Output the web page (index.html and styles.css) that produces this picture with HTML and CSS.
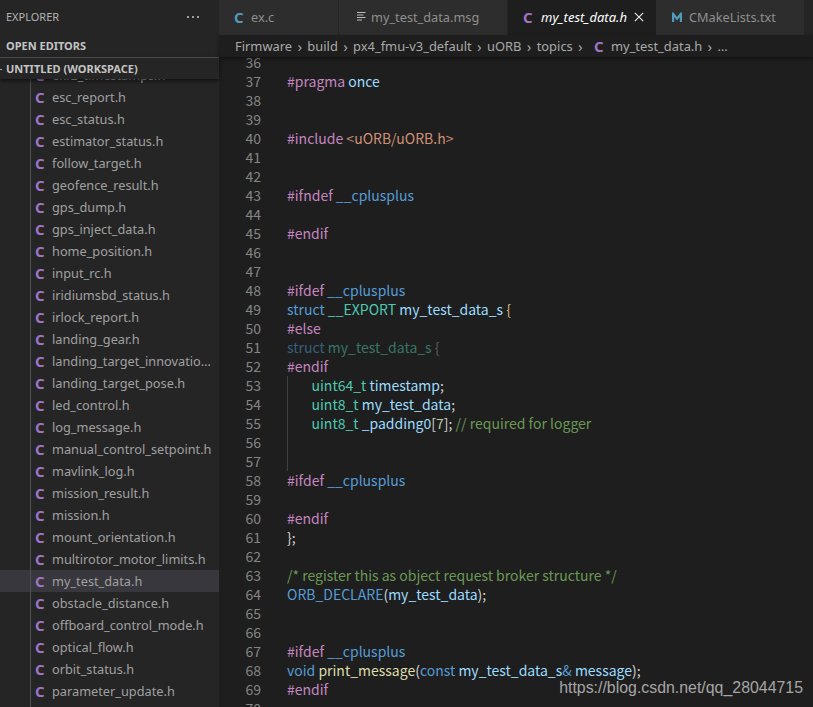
FILE: index.html
```html
<!DOCTYPE html>
<html lang="en">
<head>
<meta charset="utf-8">
<title>my_test_data.h</title>
<link rel="stylesheet" href="styles.css">
</head>
<body>
<div class="app">
  <aside class="sidebar">
    <div class="explorer-head"><span>EXPLORER</span><svg width="14" height="4" viewBox="0 0 14 4"><circle cx="2" cy="2" r="1" fill="#c8c8c8"/><circle cx="7" cy="2" r="1" fill="#c8c8c8"/><circle cx="12" cy="2" r="1" fill="#c8c8c8"/></svg></div>
    <div class="section">OPEN EDITORS</div>
    <div class="section workspace"><svg class="twist" width="6" height="22" viewBox="0 0 6 22"><path d="M0 11.500h2" stroke="#aaa" fill="none"/></svg>UNTITLED (WORKSPACE)</div>
    <div class="tree-wrap">
      <ul class="tree">
        <li><b>C</b><span>ekf2_timestamps.h</span></li>
        <li><b>C</b><span>esc_report.h</span></li>
        <li><b>C</b><span>esc_status.h</span></li>
        <li><b>C</b><span>estimator_status.h</span></li>
        <li><b>C</b><span>follow_target.h</span></li>
        <li><b>C</b><span>geofence_result.h</span></li>
        <li><b>C</b><span>gps_dump.h</span></li>
        <li><b>C</b><span>gps_inject_data.h</span></li>
        <li><b>C</b><span>home_position.h</span></li>
        <li><b>C</b><span>input_rc.h</span></li>
        <li><b>C</b><span>iridiumsbd_status.h</span></li>
        <li><b>C</b><span>irlock_report.h</span></li>
        <li><b>C</b><span>landing_gear.h</span></li>
        <li><b>C</b><span>landing_target_innovatio…</span></li>
        <li><b>C</b><span>landing_target_pose.h</span></li>
        <li><b>C</b><span>led_control.h</span></li>
        <li><b>C</b><span>log_message.h</span></li>
        <li><b>C</b><span>manual_control_setpoint.h</span></li>
        <li><b>C</b><span>mavlink_log.h</span></li>
        <li><b>C</b><span>mission_result.h</span></li>
        <li><b>C</b><span>mission.h</span></li>
        <li><b>C</b><span>mount_orientation.h</span></li>
        <li><b>C</b><span>multirotor_motor_limits.h</span></li>
        <li class="selected"><b>C</b><span>my_test_data.h</span></li>
        <li><b>C</b><span>obstacle_distance.h</span></li>
        <li><b>C</b><span>offboard_control_mode.h</span></li>
        <li><b>C</b><span>optical_flow.h</span></li>
        <li><b>C</b><span>orbit_status.h</span></li>
        <li><b>C</b><span>parameter_update.h</span></li>
      </ul>
    </div>
  </aside>
  <main class="main">
    <div class="tabs">
      <div class="tab t1"><b class="blue">C</b><span>ex.c</span></div>
      <div class="tab t2"><svg width="9" height="9" viewBox="0 0 9 9"><path d="M0 .5h8.500M0 3h6.500M0 5.500h8.500M0 8h5" stroke="#bbb" fill="none"/></svg><span>my_test_data.msg</span></div>
      <div class="tab t3 active"><b>C</b><em>my_test_data.h</em><svg class="close" width="10" height="10" viewBox="0 0 10 10"><path d="M.8.8l8.400 8.400M9.200.8L.8 9.200" stroke="#eee" fill="none" stroke-width="1.100"/></svg></div>
      <div class="tab t4"><svg width="12" height="12" viewBox="0 0 12 12"><path d="M1 11V1.500h1.500L6 6l3.500-4.500H11V11H8.800V6L6 9.500 3.200 6v5z" fill="#519aba"/></svg><span>CMakeLists.txt</span></div>
    </div>
    <div class="crumbs">
      <span>Firmware</span><i>›</i><span>build</span><i>›</i><span>px4_fmu-v3_default</span><i>›</i><span>uORB</span><i>›</i><span>topics</span><i>›</i><b>C</b><span>my_test_data.h</span><i>›</i><span>…</span>
    </div>
    <div class="code">
      <div class="ln"><u>36</u><code></code></div>
      <div class="ln"><u>37</u><code><s class="pp">#pragma</s> <s class="v">once</s></code></div>
      <div class="ln"><u>38</u><code></code></div>
      <div class="ln"><u>39</u><code></code></div>
      <div class="ln"><u>40</u><code><s class="pp">#include</s> <s class="st">&lt;uORB/uORB.h&gt;</s></code></div>
      <div class="ln"><u>41</u><code></code></div>
      <div class="ln"><u>42</u><code></code></div>
      <div class="ln"><u>43</u><code><s class="pp">#ifndef</s> <s class="k">__cplusplus</s></code></div>
      <div class="ln"><u>44</u><code></code></div>
      <div class="ln"><u>45</u><code><s class="pp">#endif</s></code></div>
      <div class="ln"><u>46</u><code></code></div>
      <div class="ln"><u>47</u><code></code></div>
      <div class="ln"><u>48</u><code><s class="pp">#ifdef</s> <s class="k">__cplusplus</s></code></div>
      <div class="ln"><u>49</u><code><s class="k">struct</s> <s class="t">__EXPORT</s> <s class="v">my_test_data_s</s> <s class="br">{</s></code></div>
      <div class="ln"><u>50</u><code><s class="pp">#else</s></code></div>
      <div class="ln"><u>51</u><code class="dim"><s class="k">struct</s> <s class="t">my_test_data_s</s> <s class="g">{</s></code></div>
      <div class="ln"><u>52</u><code><s class="pp">#endif</s></code></div>
      <div class="ln guide"><u>53</u><code><s class="t">uint64_t</s> <s class="v">timestamp</s>;</code></div>
      <div class="ln guide"><u>54</u><code><s class="t">uint8_t</s> <s class="v">my_test_data</s>;</code></div>
      <div class="ln guide"><u>55</u><code><s class="t">uint8_t</s> <s class="v">_padding0</s>[<s class="n">7</s>]; <s class="c">// required for logger</s></code></div>
      <div class="ln guide"><u>56</u><code></code></div>
      <div class="ln guide"><u>57</u><code></code></div>
      <div class="ln"><u>58</u><code><s class="pp">#ifdef</s> <s class="k">__cplusplus</s></code></div>
      <div class="ln"><u>59</u><code></code></div>
      <div class="ln"><u>60</u><code><s class="pp">#endif</s></code></div>
      <div class="ln"><u>61</u><code>};</code></div>
      <div class="ln"><u>62</u><code></code></div>
      <div class="ln"><u>63</u><code><s class="c">/* register this as object request broker structure */</s></code></div>
      <div class="ln"><u>64</u><code><s class="k">ORB_DECLARE</s>(<s class="v">my_test_data</s>);</code></div>
      <div class="ln"><u>65</u><code></code></div>
      <div class="ln"><u>66</u><code></code></div>
      <div class="ln"><u>67</u><code><s class="pp">#ifdef</s> <s class="k">__cplusplus</s></code></div>
      <div class="ln"><u>68</u><code><s class="k">void</s> <s class="f">print_message</s>(<s class="k">const</s> <s class="v">my_test_data_s</s><s class="k">&amp;</s> <s class="v">message</s>);</code></div>
      <div class="ln"><u>69</u><code><s class="pp">#endif</s></code></div>
      <div class="ln"><u>70</u><code></code></div>
    </div>
  </main>
  <div class="watermark">https://blog.csdn.net/qq_28044715</div>
</div>
</body>
</html>
```
FILE: styles.css
```css
* { box-sizing: border-box; }
html, body { margin: 0; height: 100%; overflow: hidden; background: #1e1e1e; }
.app { position: relative; display: flex; width: 813px; height: 707px; overflow: hidden; font-family: "Noto Sans", "Open Sans", sans-serif; }

.sidebar { width: 219px; flex: none; display: flex; flex-direction: column; background: #252526; color: #a9a9a9; }
.explorer-head { height: 35px; flex: none; display: flex; align-items: center; justify-content: space-between; padding: 0 19px 2px 6px; font-size: 11px; color: #b4b4b4; }
.section { position: relative; height: 22px; flex: none; display: flex; align-items: center; padding: 0 0 2px 6px; font-size: 11px; font-weight: 700; color: #c4c4c4; }
.workspace { border-top: 1px solid #4a4a4a; z-index: 2; box-shadow: 0 2px 4px rgba(0,0,0,.55); background: #252526; padding-bottom: 1px; }
.twist { position: absolute; left: 0; top: 0; }
.tree-wrap { flex: 1; overflow: hidden; position: relative; }
.tree { list-style: none; margin: -15px 0 0; padding: 0; position: relative; }
.tree::before { content: ""; position: absolute; left: 30px; top: 0; bottom: -40px; width: 1px; background: #4f4f4f; z-index: 1; }
.tree li { height: 22px; display: flex; align-items: center; padding-left: 35px; font-size: 12.750px; white-space: nowrap; color: #a0a0a0; }
.tree li b { width: 17px; flex: none; font-family: "Noto Sans", sans-serif; font-size: 15px; font-weight: 700; color: #a074c4; }
.tree li.selected { background: #37373d; }

.main { flex: 1; min-width: 0; display: flex; flex-direction: column; }
.tabs { height: 35px; flex: none; display: flex; background: #252526; font-size: 12.750px; }
.tab { display: flex; align-items: center; height: 35px; padding-bottom: 2px; background: #2d2d2d; color: #8f8f8f; border-right: 1px solid #252526; }
.tab b { font-size: 15px; color: #a074c4; }
.tab b.blue { color: #519aba; }
.t1 { width: 120px; padding-left: 15px; }
.t1 b { width: 17px; }
.t2 { width: 169px; padding-left: 18px; }
.t2 svg { margin-right: 5px; }
.t3 { width: 148px; padding-left: 15px; }
.t3 b { width: 18px; }
.t4 { width: 149px; padding-left: 15px; }
.t4 svg { margin-right: 6px; }
.active { background: #1e1e1e; color: #fff; border-right: none; }
.active em { font-style: italic; font-size: 13px; }
.close { margin-left: 7px; }

.crumbs { height: 22px; flex: none; display: flex; align-items: center; padding-left: 16px; font-size: 12.900px; color: #a9a9a9; background: #1e1e1e; box-shadow: 0 2px 4px rgba(0,0,0,.4); position: relative; z-index: 1; white-space: nowrap; }
.crumbs i { font-style: normal; font-size: 15px; margin: 0 5.300px; color: #a0a0a0; line-height: 1; }
.crumbs b { width: 17px; margin-left: 6px; font-size: 15px; color: #a074c4; }

.code { flex: 1; overflow: hidden; margin-top: -4px; font-family: "Noto Sans CJK SC", "Noto Sans", sans-serif; font-size: 14px; color: #d4d4d4; }
.ln { display: flex; height: 19px; line-height: 19px; white-space: pre; }
.ln u { width: 42px; flex: none; text-align: right; text-decoration: none; color: #858585; }
.ln code { font-family: inherit; margin-left: 26px; }
.guide code { position: relative; padding-left: 24.500px; flex: 1; }
.guide code::before { content: ""; position: absolute; left: 0; top: 0; bottom: 0; width: 1px; background: #404040; }
.ln s { text-decoration: none; }
.pp { color: #c586c0; }
.k { color: #569cd6; }
.t { color: #4ec9b0; }
.v { color: #9cdcfe; }
.st { color: #ce9178; }
.c { color: #6a9955; }
.n { color: #b5cea8; }
.f { color: #dcdcaa; }
.br { color: #d7ba7d; }
.g { color: #999; }
.dim { opacity: .5; }

.watermark { position: absolute; right: 10px; bottom: 9px; font-family: "Liberation Sans", Arial, sans-serif; font-size: 15.900px; line-height: 20px; color: #a6a6a6; }
```
